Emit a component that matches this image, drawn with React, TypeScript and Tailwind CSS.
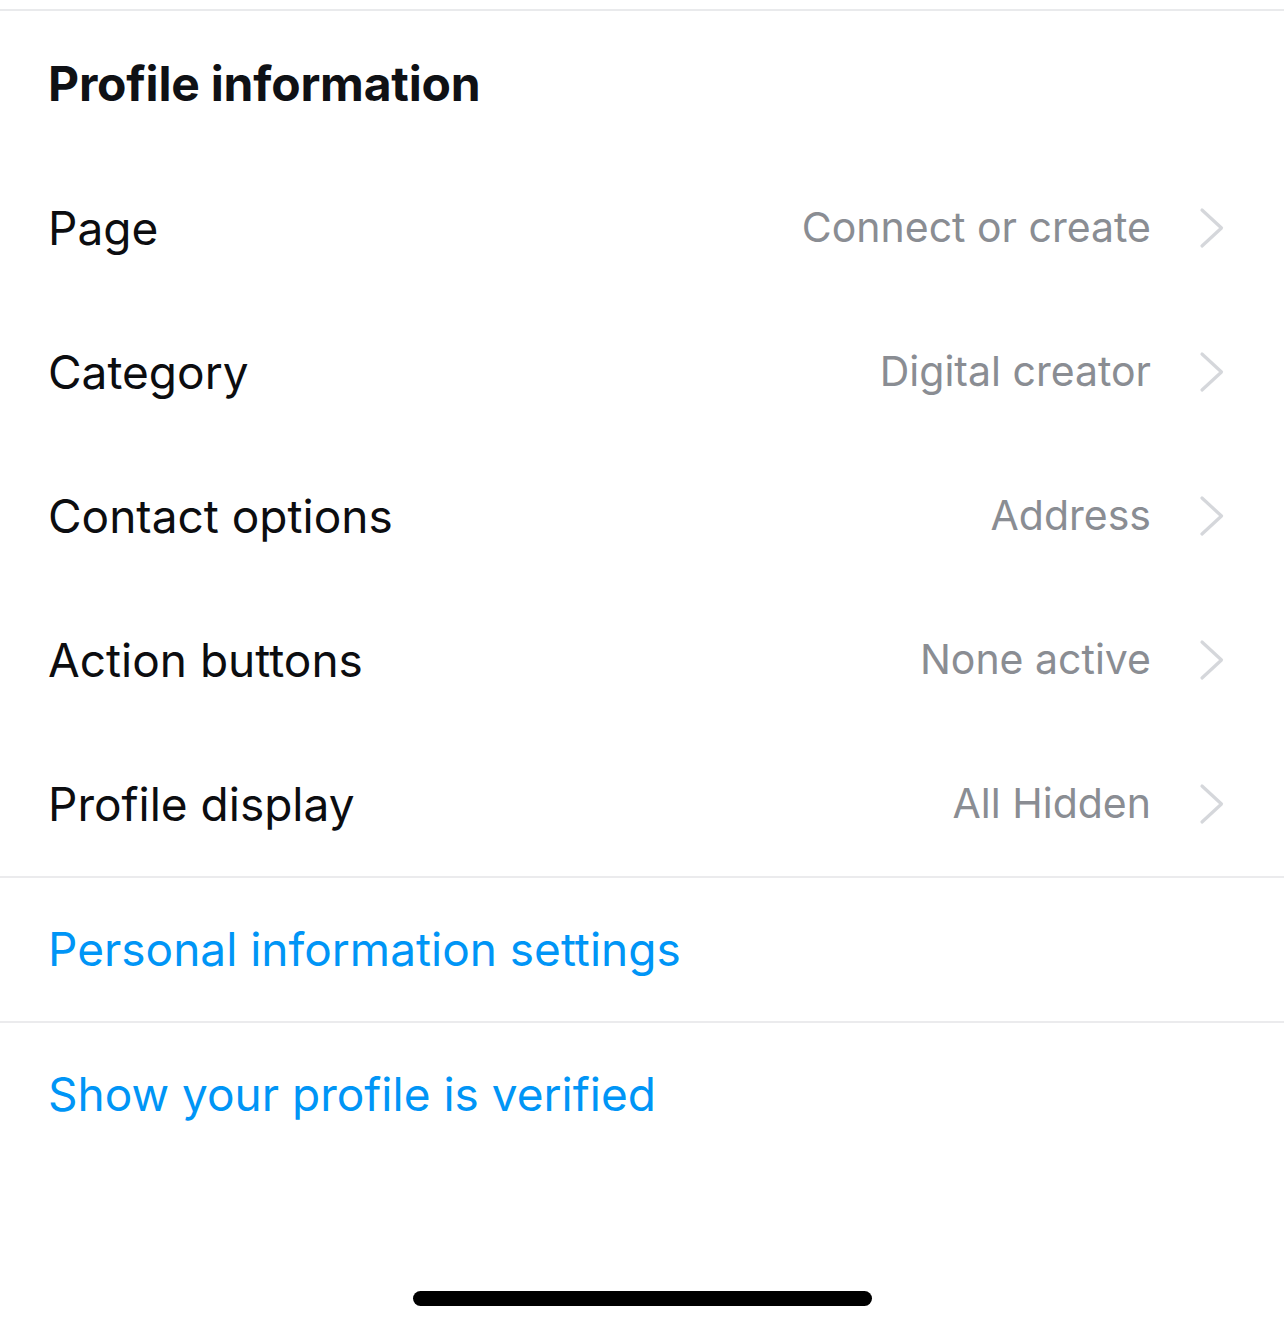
interface SettingRow {
  label: string;
  value: string;
}

const rows: SettingRow[] = [
  { label: 'Page', value: 'Connect or create' },
  { label: 'Category', value: 'Digital creator' },
  { label: 'Contact options', value: 'Address' },
  { label: 'Action buttons', value: 'None active' },
  { label: 'Profile display', value: 'All Hidden' },
];

const links = ['Personal information settings', 'Show your profile is verified'];

// thin disclosure chevron, like the iOS one
function Chevron() {
  return (
    <svg width="26" height="42" viewBox="0 0 26 42" fill="none" className="ml-[48px] shrink-0">
      <path
        d="M3 3 L22.5 21 L3 39"
        stroke="#d5d7db"
        strokeWidth="3.2"
        strokeLinecap="round"
        strokeLinejoin="round"
      />
    </svg>
  );
}

export default function App() {
  return (
    <div
      className="flex h-[1331px] w-full flex-col bg-white"
      style={{ fontFamily: 'Inter, "Noto Sans", sans-serif' }}
    >
      <div className="mt-[9px] h-[2px] bg-[#e9eaec]" />

      <div className="flex h-[145px] items-center pl-[48px]">
        <h2 className="text-[48px] font-bold tracking-[-0.2px] text-[#0f1115]">Profile information</h2>
      </div>

      {rows.map((row) => (
        <div key={row.label} className="flex h-[144px] items-center pl-[48px] pr-[59px]">
          <span className="flex-1 text-[46px] text-[#0c0d10]">{row.label}</span>
          <span className="text-[41px] text-[#8a8d93]">{row.value}</span>
          <Chevron />
        </div>
      ))}

      {links.map((link) => (
        <div key={link} className="flex h-[145px] items-center border-t-2 border-[#ebebed] pl-[48px]">
          <span className="text-[46px] text-[#0095f6]">{link}</span>
        </div>
      ))}

      <div className="mx-auto mt-auto mb-[25px] h-[15px] w-[459px] rounded-full bg-black" />
    </div>
  );
}
